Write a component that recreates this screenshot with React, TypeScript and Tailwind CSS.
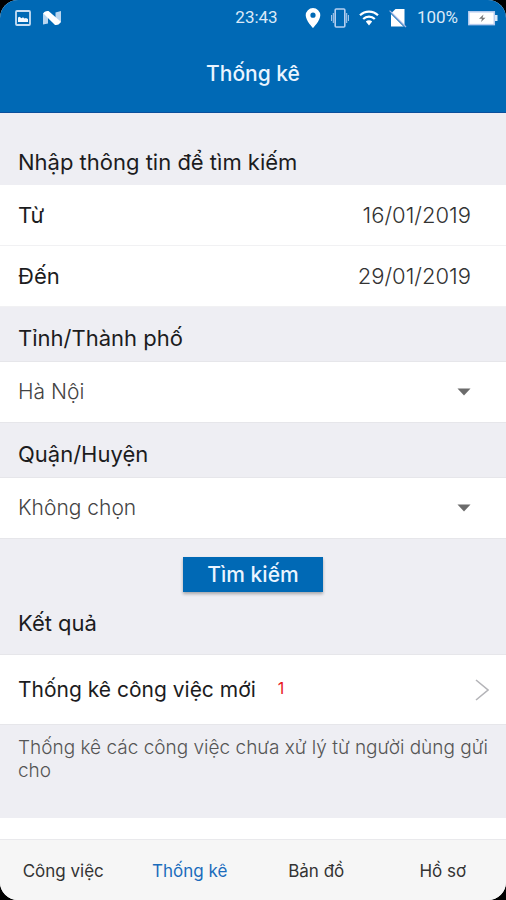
import { useState } from "react";
import type { ReactNode } from "react";

const tabs = ["Công việc", "Thống kê", "Bản đồ", "Hồ sơ"];

const StatusBar = () => (
  <div className="flex h-9 items-center justify-between px-2 font-['Roboto'] text-[17px] text-[#dbe9f8]">
    <div className="flex flex-1 items-center gap-3 pl-[7px]">
      <svg viewBox="0 0 16 16" className="size-4" aria-hidden="true">
        <rect x="1" y="1" width="14" height="14" rx="1" fill="none" stroke="#c9dff4" strokeWidth="1.8" />
        <path d="M3 12V7.500l1.500-.8 2 1.500L8 7.200l1.500 1.300L11 8l2 1v3z" fill="#f4f9ff" />
      </svg>
      <svg viewBox="0 0 18 16" className="h-4 w-[18px]" aria-hidden="true">
        <path d="M0 3.2L5 1.500v12L0 14.500z" fill="#b9d6f0" />
        <path d="M12.500 2.500L18 1v11.500l-5.500 2z" fill="#b9d6f0" />
        <path d="M.4 3.500Q1 .8 5.500 1L17.600 11.500Q16.500 15.500 12 15z" fill="#fff" />
      </svg>
    </div>
    <span>23:43</span>
    <div className="flex flex-1 items-center justify-end gap-[10px]">
      <svg viewBox="0 0 16 20" className="h-5 w-4" aria-hidden="true">
        <path
          d="M8 0a7.300 7.300 0 0 0-7.300 7.300C.7 12.700 8 20 8 20s7.300-7.300 7.300-12.700A7.300 7.300 0 0 0 8 0zm0 4.600a2.600 2.600 0 1 1 0 5.200 2.600 2.600 0 0 1 0-5.200z"
          fill="#fff"
          fillRule="evenodd"
        />
      </svg>
      <svg viewBox="0 0 18 20" className="h-5 w-[18px]" fill="none" stroke="#b5cff0" aria-hidden="true">
        <rect x="4.200" y="1" width="9.600" height="18" rx="1" strokeWidth="1.600" />
        <path d="M2.300 5v10M.6 7v6M15.700 5v10M17.400 7v6" strokeWidth="1" />
      </svg>
      <svg viewBox="0 0 20 16" className="h-4 w-5" fill="none" stroke="#fff" strokeWidth="2.200" aria-hidden="true">
        <path d="M1 5.300C6 .4 14 .4 19 5.300M4.200 9c3.200-3.200 8.400-3.200 11.600 0" />
        <path d="M6.800 11.500L10 15.500l3.200-4c-1.800-1.600-4.600-1.600-6.400 0z" fill="#fff" stroke="none" />
      </svg>
      <svg viewBox="0 0 18 20" className="h-5 w-[18px]" aria-hidden="true">
        <path d="M6.500 1h9v17.500H2V5.500z" fill="#fff" />
        <path d="M.6 3.800L16.600 19.800" stroke="#0069b5" strokeWidth="1.200" />
        <path d="M.6 2.600L17 19" stroke="#a9b8e4" strokeWidth="1.200" />
      </svg>
      <span>100%</span>
      <svg viewBox="0 0 30 16" className="h-4 w-[30px]" aria-hidden="true">
        <rect x=".8" y="1.800" width="25.500" height="12.800" fill="#fff" stroke="#b9cdef" strokeWidth="1.500" />
        <path d="M27 5h2.500v6H27z" fill="#dbe9f8" />
        <path d="M15.500 4.500L11 8.800h3l-1 3.200 4.500-4.300h-3z" fill="#777" />
      </svg>
    </div>
  </div>
);

const SectionTitle = ({ children }: { children: ReactNode }) => (
  <h2 className="px-[18px] pb-[9px] pt-[17px] text-[22px] leading-7">{children}</h2>
);

type DateRowProps = {
  id: string;
  label: string;
  value: string;
  onChange: (value: string) => void;
};

const DateRow = ({ id, label, value, onChange }: DateRowProps) => (
  <div className="flex h-[61px] items-center justify-between border-b border-[#f1f1f3] bg-white pl-[18px] pr-[35px] text-[22px]">
    <label htmlFor={id}>{label}</label>
    <input
      id={id}
      type="text"
      value={value}
      onChange={(e) => onChange(e.target.value)}
      className="w-40 bg-transparent text-right font-light text-[#333] outline-none"
    />
  </div>
);

const SelectRow = ({ label, options }: { label: string; options: string[] }) => (
  <div className="relative border-y border-[#e6e6ea] bg-white">
    <select
      aria-label={label}
      className="h-[60px] w-full appearance-none bg-transparent px-[18px] text-[21px] font-light text-[#444] outline-none"
    >
      {options.map((option) => (
        <option key={option}>{option}</option>
      ))}
    </select>
    <svg
      viewBox="0 0 14 8"
      className="pointer-events-none absolute right-[35px] top-[26px] h-2 w-[14px]"
      aria-hidden="true"
    >
      <path d="M.5 .5h13L7 7.500z" fill="#6b6b6b" />
    </svg>
  </div>
);

const App = () => {
  const [from, setFrom] = useState("16/01/2019");
  const [to, setTo] = useState("29/01/2019");
  const [active, setActive] = useState("Thống kê");

  return (
    <div className="min-h-screen bg-black">
      <div className="flex min-h-screen flex-col overflow-hidden rounded-[18px] bg-white font-['Inter','Roboto',sans-serif] text-[#1c1c1e]">
        <header className="border-b border-[#0a4f9c] bg-[#0069b5]">
          <StatusBar />
          <h1 className="flex h-[76px] items-center justify-center text-[21px] font-medium text-[#eaf4ff]">
            Thống kê
          </h1>
        </header>

        <main className="flex-1">
          <form onSubmit={(e) => e.preventDefault()} className="bg-[#eeeef3]">
            <div className="pt-[18px]">
              <SectionTitle>Nhập thông tin để tìm kiếm</SectionTitle>
            </div>
            <DateRow id="from" label="Từ" value={from} onChange={setFrom} />
            <DateRow id="to" label="Đến" value={to} onChange={setTo} />
            <SectionTitle>Tỉnh/Thành phố</SectionTitle>
            <SelectRow label="Tỉnh/Thành phố" options={["Hà Nội", "Hải Phòng", "Đà Nẵng"]} />
            <SectionTitle>Quận/Huyện</SectionTitle>
            <SelectRow label="Quận/Huyện" options={["Không chọn", "Ba Đình", "Hoàn Kiếm"]} />
            <div className="flex justify-center pt-[18px]">
              <button
                type="submit"
                className="h-[35px] bg-[#0069b5] px-6 text-[21px] font-medium text-[#eaf4ff] shadow-[0_2px_3px_rgba(0,0,0,0.3)]"
              >
                Tìm kiếm
              </button>
            </div>
          </form>

          <section className="bg-[#eeeef3]">
            <div className="pb-2">
              <SectionTitle>Kết quả</SectionTitle>
            </div>
            <a
              href="#new-jobs"
              className="flex h-[71px] items-center border-y border-[#e6e6ea] bg-white pl-[18px] pr-[17px] text-[21px]"
            >
              Thống kê công việc mới
              <span className="ml-[22px] pb-1 text-base text-[#e8141c]">1</span>
              <svg
                viewBox="0 0 14 22"
                className="ml-auto h-[22px] w-[14px]"
                fill="none"
                stroke="#b4b4b8"
                strokeWidth="1.600"
                aria-hidden="true"
              >
                <path d="M1 1l12 10L1 21" />
              </svg>
            </a>
            <p className="pb-9 pl-[18px] pr-3 pt-[11px] text-[19px] font-light leading-[23px] text-[#555]">
              Thống kê các công việc chưa xử lý từ người dùng gửi cho
            </p>
          </section>
        </main>

        <nav className="grid h-[61px] grid-cols-4 border-t border-[#e9e9ec] bg-[#f6f6f6] pt-1 text-[17px]">
          {tabs.map((tab) => (
            <button
              key={tab}
              type="button"
              onClick={() => setActive(tab)}
              className={tab === active ? "text-[#1b6cbc]" : "text-[#333]"}
            >
              {tab}
            </button>
          ))}
        </nav>
      </div>
    </div>
  );
};

export default App;
